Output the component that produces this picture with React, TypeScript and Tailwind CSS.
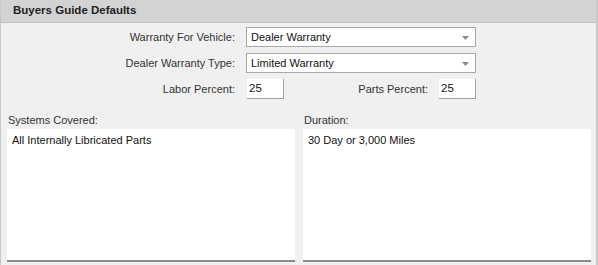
import React from "react";

const font = "font-['Liberation_Sans',Arial,sans-serif]";

function Select({ value }: { value: string }) {
  return (
    <div className="relative flex h-[20px] w-[230px] items-center border border-[#a9a9a9] bg-white pl-[4px] text-[11px] text-[#111]">
      <span>{value}</span>
      <svg
        className="absolute right-[6px] top-[8px]"
        width="7"
        height="4"
        viewBox="0 0 7 4"
      >
        <path d="M0 0h7L3.5 4z" fill="#8a8a8a" />
      </svg>
    </div>
  );
}

function NumberBox({ value }: { value: string }) {
  return (
    <div className="flex h-[20px] w-[37px] items-center border-b border-r border-[#a0a0a0] bg-white pl-[2px] text-[11.5px] text-[#111]">
      {value}
    </div>
  );
}

function TextBlock({ label, value }: { label: string; value: string }) {
  return (
    <div className="flex flex-col">
      <div className="h-[20px] pl-[1px] pt-[4px] text-[11px] leading-[14px] text-[#333]">
        {label}
      </div>
      <div className="h-[133px] border-b-2 border-[#8c8c8c] bg-white px-[5px] pt-[4px] text-[11px] leading-[14px] text-[#111]">
        {value}
      </div>
    </div>
  );
}

export default function App() {
  return (
    <div
      className={`${font} h-[265px] w-[598px] overflow-hidden border-l border-r-2 border-[#c8c8c8] bg-[#f0f0f0]`}
    >
      <div className="flex h-[23px] items-center border-b border-[#c2c2c2] bg-[#d3d3d3] pl-[12px] text-[11.5px] font-bold text-[#222]">
        Buyers Guide Defaults
      </div>

      <div className="flex flex-col gap-[6px] pt-[4px]">
        <div className="flex items-center">
          <div className="w-[234px] text-right text-[11px] text-[#333]">
            Warranty For Vehicle:
          </div>
          <div className="ml-[11px]">
            <Select value="Dealer Warranty" />
          </div>
        </div>
        <div className="flex items-center">
          <div className="w-[234px] text-right text-[11px] text-[#333]">
            Dealer Warranty Type:
          </div>
          <div className="ml-[11px]">
            <Select value="Limited Warranty" />
          </div>
        </div>
        <div className="flex items-center">
          <div className="w-[234px] text-right text-[11px] text-[#333]">
            Labor Percent:
          </div>
          <div className="ml-[12px]">
            <NumberBox value="25" />
          </div>
          <div className="w-[144px] text-right text-[11px] text-[#333]">
            Parts Percent:
          </div>
          <div className="ml-[11px]">
            <NumberBox value="25" />
          </div>
        </div>
      </div>

      <div className="mt-[10px] grid grid-cols-[288px_288px] gap-x-[8px] pl-[6px]">
        <TextBlock label="Systems Covered:" value="All Internally Libricated Parts" />
        <TextBlock label="Duration:" value="30 Day or 3,000 Miles" />
      </div>
    </div>
  );
}
